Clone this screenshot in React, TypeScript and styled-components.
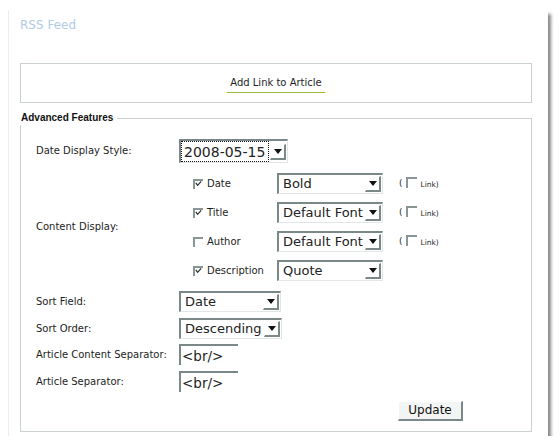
import * as React from 'react'
import styled, { createGlobalStyle, css } from 'styled-components'

// RSS feed settings panel, old-school form look

const GlobalStyle = createGlobalStyle`
  html, body {
    margin: 0;
    padding: 0;
    background: #fff;
  }
  body {
    font-family: "DejaVu Sans", Verdana, sans-serif;
    color: #1e1e1e;
  }
`

const Window = styled.div`
  box-sizing: border-box;
  width: 540px;
  height: 426px;
  margin: 10px 0 0 8px;
  padding: 8px 16px 0 11px;
  background: #fff;
  border-left: 1px solid #ececec;
  box-shadow: 3px 4px 3px rgba(40, 40, 40, 0.55);
`

const Title = styled.h1`
  margin: 0;
  font-size: 12px;
  line-height: 15px;
  font-weight: normal;
  color: #b3cbe4;
`

const LinkBox = styled.div`
  box-sizing: border-box;
  height: 40px;
  margin-top: 30px;
  border: 1px solid #cbd1d1;
  display: flex;
  align-items: center;
  justify-content: center;
`

const ArticleLink = styled.a`
  display: inline-block;
  padding: 4px 3px 3px;
  font-size: 10px;
  line-height: 12px;
  color: #1e1e1e;
  text-decoration: none;
  border-bottom: 1px solid #9ab83c;
  cursor: pointer;
`

const Fieldset = styled.fieldset`
  margin: 8px 0 0;
  padding: 0;
  min-width: 0;
  border: 1px solid #cbd1d1;
`

const Legend = styled.legend`
  margin-left: -1px;
  padding: 0 4px 0 1px;
  background: #fff;
  font-family: "Liberation Sans", Arial, sans-serif;
  font-weight: bold;
  font-size: 10px;
  line-height: 14px;
  color: #111;
`

const Form = styled.div`
  display: flex;
  flex-direction: column;
  padding: 14px 0 10px 15px;
`

const Row = styled.div<{ $gap?: number }>`
  display: grid;
  grid-template-columns: 143px 1fr;
  align-items: center;
  margin-top: ${p => p.$gap ?? 0}px;
`

const Label = styled.span`
  font-size: 10px;
  line-height: 12px;
`

const Options = styled.div`
  display: flex;
  flex-direction: column;
  gap: 8px;
`

const OptionRow = styled.div`
  display: flex;
  align-items: center;
  height: 21px;
`

const CheckCell = styled.label`
  box-sizing: border-box;
  width: 98px;
  padding-left: 14px;
  display: flex;
  align-items: center;
  gap: 4px;
  font-size: 10px;
`

const Box = styled.span<{ $small?: boolean }>`
  box-sizing: border-box;
  width: ${p => (p.$small ? 11 : 10)}px;
  height: ${p => (p.$small ? 11 : 10)}px;
  border-style: solid;
  border-width: 2px 0 0 2px;
  border-color: #8a9696;
  display: inline-flex;
  align-items: flex-start;
  justify-content: flex-start;
  flex: none;
`

const LinkOption = styled.span`
  display: flex;
  align-items: center;
  margin-left: 16px;
  margin-top: -2px;
`

const Paren = styled.span`
  font-size: 9px;
  margin-right: 3px;
`

const Tiny = styled.span`
  font-size: 7.5px;
  margin-left: 4px;
  margin-top: 4px;
`

const SelectBox = styled.div<{ $width: number; $big?: boolean }>`
  box-sizing: border-box;
  width: ${p => p.$width}px;
  height: ${p => (p.$big ? 24 : 21)}px;
  display: flex;
  align-items: center;
  border-style: solid;
  border-width: 2px 1px 1px 2px;
  border-color: #7b8888 #e2e6e6 #e2e6e6 #7b8888;
  background: #fff;
  font-size: ${p => (p.$big ? 14 : 13)}px;
  color: #222;
`

const SelectText = styled.span<{ $focused?: boolean }>`
  flex: 1;
  padding-left: 4px;
  line-height: 16px;
  white-space: nowrap;
  overflow: hidden;
  ${p =>
    p.$focused &&
    css`
      align-self: stretch;
      display: flex;
      align-items: center;
      padding-left: 2px;
      margin-right: 1px;
      border: 1px dotted #111;
    `}
`

const ArrowButton = styled.span`
  box-sizing: border-box;
  width: 16px;
  height: 16px;
  margin-right: 1px;
  flex: none;
  border-style: solid;
  border-width: 1px 2px 2px 1px;
  border-color: #fff #7b8888 #7b8888 #fff;
  display: flex;
  align-items: center;
  justify-content: center;

  &::after {
    content: '';
    border-left: 4px solid transparent;
    border-right: 4px solid transparent;
    border-top: 5px solid #111;
  }
`

const TextField = styled.input`
  box-sizing: border-box;
  width: 59px;
  height: 21px;
  margin: 0;
  padding: 0 0 0 1px;
  border-style: solid;
  border-width: 2px 0 0 2px;
  border-color: #7b8888;
  outline: none;
  background: #fff;
  font-family: "DejaVu Sans", Verdana, sans-serif;
  font-size: 13.5px;
  color: #222;
`

const ButtonRow = styled.div`
  margin-top: 7px;
  padding-left: 362px;
`

const UpdateButton = styled.button`
  box-sizing: border-box;
  width: 65px;
  height: 20px;
  padding: 0;
  border-style: solid;
  border-width: 1px 2px 2px 1px;
  border-color: #fff #7b8888 #7b8888 #fff;
  background: #f3f5f4;
  font-family: "DejaVu Sans", Verdana, sans-serif;
  font-size: 12px;
  color: #111;
`

const Check = () => (
  <svg width="7" height="6" viewBox="0 0 7 6">
    <path d="M0.8 1.8 L2.6 4.4 L6.2 0.4" fill="none" stroke="#2a2a2a" strokeWidth="1.2" />
  </svg>
)

const CheckBox: React.FC<{ checked?: boolean; small?: boolean }> = ({ checked, small }) => (
  <Box $small={small}>{checked && <Check />}</Box>
)

const FakeSelect: React.FC<{ value: string; width: number; big?: boolean; focused?: boolean }> = ({
  value,
  width,
  big,
  focused,
}) => (
  <SelectBox $width={width} $big={big}>
    <SelectText $focused={focused}>{value}</SelectText>
    <ArrowButton />
  </SelectBox>
)

const contentOptions = [
  { name: 'Date', checked: true, style: 'Bold', link: true },
  { name: 'Title', checked: true, style: 'Default Font', link: true },
  { name: 'Author', checked: false, style: 'Default Font', link: true },
  { name: 'Description', checked: true, style: 'Quote', link: false },
]

export default function App() {
  return (
    <>
      <GlobalStyle />
      <Window>
        <Title>RSS Feed</Title>
        <LinkBox>
          <ArticleLink>Add Link to Article</ArticleLink>
        </LinkBox>
        <Fieldset>
          <Legend>Advanced Features</Legend>
          <Form>
            <Row>
              <Label>Date Display Style:</Label>
              <FakeSelect value="2008-05-15" width={109} big focused />
            </Row>
            <Row $gap={10}>
              <Label>Content Display:</Label>
              <Options>
                {contentOptions.map(opt => (
                  <OptionRow key={opt.name}>
                    <CheckCell>
                      <CheckBox checked={opt.checked} />
                      {opt.name}
                    </CheckCell>
                    <FakeSelect value={opt.style} width={106} />
                    {opt.link && (
                      <LinkOption>
                        <Paren>(</Paren>
                        <CheckBox small />
                        <Tiny>Link)</Tiny>
                      </LinkOption>
                    )}
                  </OptionRow>
                ))}
              </Options>
            </Row>
            <Row $gap={10}>
              <Label>Sort Field:</Label>
              <FakeSelect value="Date" width={102} />
            </Row>
            <Row $gap={6}>
              <Label>Sort Order:</Label>
              <FakeSelect value="Descending" width={103} />
            </Row>
            <Row $gap={5}>
              <Label>Article Content Separator:</Label>
              <TextField readOnly value="<br/>" />
            </Row>
            <Row $gap={6}>
              <Label>Article Separator:</Label>
              <TextField readOnly value="<br/>" />
            </Row>
            <ButtonRow>
              <UpdateButton>Update</UpdateButton>
            </ButtonRow>
          </Form>
        </Fieldset>
      </Window>
    </>
  )
}
